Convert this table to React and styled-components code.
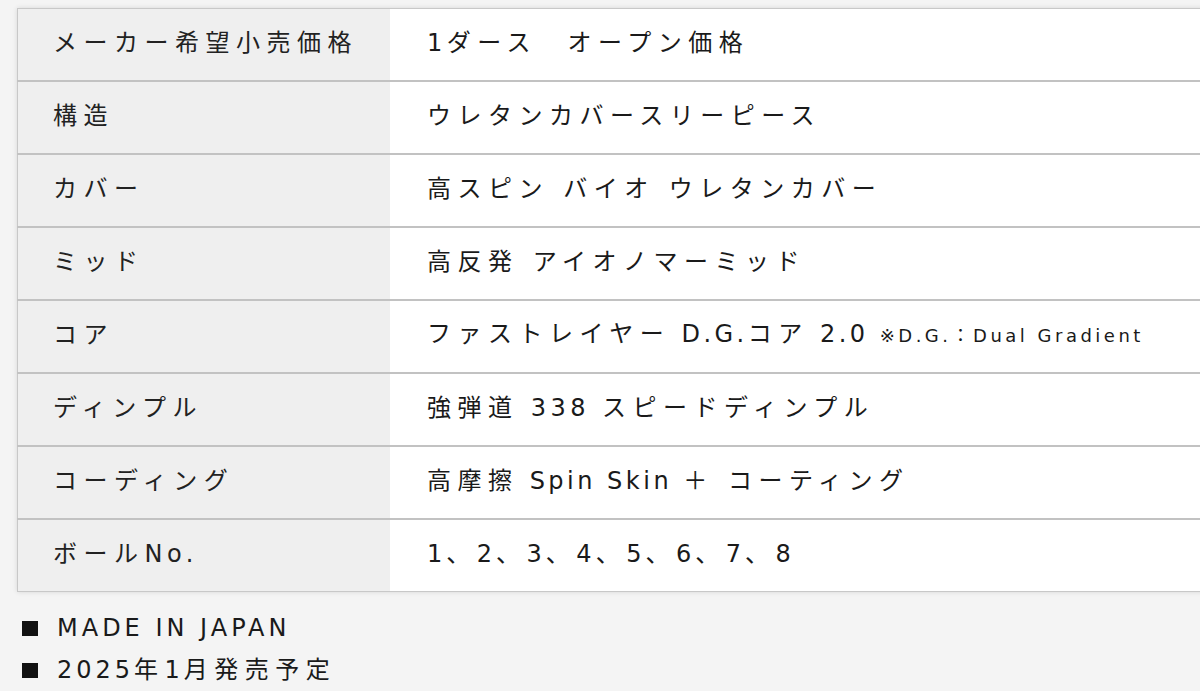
import React from 'react';
import styled, { createGlobalStyle } from 'styled-components';

const GlobalStyle = createGlobalStyle`
    html, body {
        margin: 0;
        padding: 0;
        background: #f4f4f4;
        overflow: hidden;
    }
    body {
        font-family: "DejaVu Sans", "Noto Sans CJK JP", sans-serif;
        color: #1a1a1a;
    }
`;

const Page = styled.div`
    padding: 8px 0 0 17px;
    width: 1240px;
`;

const SpecTable = styled.table`
    width: 1230px;
    border-collapse: collapse;
    background: #fff;
    border: 1px solid #c8c8c8;
    box-shadow: 0 0 5px rgba(0, 0, 0, 0.12);
`;

const Row = styled.tr`
    border-bottom: 2px solid #c2c2c2;
    &:last-child {
        border-bottom: none;
    }
`;

const Label = styled.th`
    width: 337px;
    height: 67px;
    padding: 0 0 4px 35px;
    background: #efefef;
    text-align: left;
    font-weight: normal;
    font-size: 24px;
    line-height: 30px;
    letter-spacing: 6.5px;
    color: #222;
`;

const Value = styled.td`
    height: 67px;
    padding: 0 0 4px 37px;
    font-size: 24px;
    line-height: 30px;
    letter-spacing: 6.5px;
    color: #1a1a1a;
`;

// latin runs are set tighter than the kana around them
const Lat = styled.span`
    letter-spacing: ${(p) => p.$sp || '3.5px'};
`;

const Note = styled.span`
    font-size: 18px;
    letter-spacing: 3.5px;
`;

const List = styled.ul`
    list-style: none;
    margin: 15px 0 0;
    padding: 0 0 0 4px;
`;

const Item = styled.li`
    display: flex;
    align-items: center;
    height: 42px;
    line-height: 42px;
    font-size: 24px;
    letter-spacing: 6.5px;
`;

const Bullet = styled.span`
    width: 16px;
    height: 15px;
    background: #111;
    margin: 0 19px 0 1px;
    flex-shrink: 0;
`;

const specs = [
    ['メーカー希望小売価格', <><Lat $sp="4.5px">1</Lat>ダース　オープン価格</>],
    ['構造', 'ウレタンカバースリーピース'],
    ['カバー', '高スピン バイオ ウレタンカバー'],
    ['ミッド', '高反発 アイオノマーミッド'],
    ['コア', <>ファストレイヤー<Lat> D.G.</Lat>コア<Lat> 2.0 </Lat><Note>※D.G.：Dual Gradient</Note></>],
    ['ディンプル', <>強弾道<Lat $sp="4.5px"> 338 </Lat>スピードディンプル</>],
    ['コーディング', <>高摩擦<Lat> Spin Skin </Lat>＋ コーティング</>],
    ['ボール', <><Lat $sp="4px">1</Lat>、<Lat $sp="4px">2</Lat>、<Lat $sp="4px">3</Lat>、<Lat $sp="4px">4</Lat>、<Lat $sp="4px">5</Lat>、<Lat $sp="4px">6</Lat>、<Lat $sp="4px">7</Lat>、<Lat $sp="4px">8</Lat></>],
];

export default function App() {
    return (
        <Page>
            <GlobalStyle />
            <SpecTable>
                <tbody>
                    {specs.map(([label, value]) => (
                        <Row key={label}>
                            <Label>
                                {label === 'ボール' ? <>ボール<Lat $sp="4.5px">No.</Lat></> : label}
                            </Label>
                            <Value>{value}</Value>
                        </Row>
                    ))}
                </tbody>
            </SpecTable>
            <List>
                <Item><Bullet /><Lat $sp="4px">MADE IN JAPAN</Lat></Item>
                <Item><Bullet /><Lat $sp="4px">2025</Lat>年<Lat $sp="4px">1</Lat>月発売予定</Item>
            </List>
        </Page>
    );
}
